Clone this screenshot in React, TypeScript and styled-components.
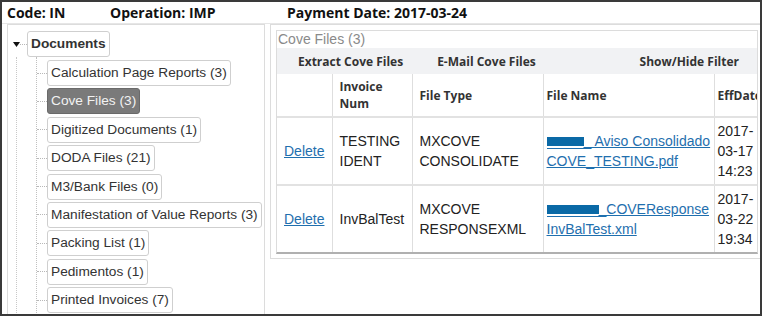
import React from "react";
import styled, { createGlobalStyle } from "styled-components";

const GlobalStyle = createGlobalStyle`
  body {
    margin: 0;
    background: #fff;
  }
`;

const Frame = styled.div`
  width: 762px;
  height: 316px;
  box-sizing: border-box;
  border: 2px solid #3a3a3a;
  overflow: hidden;
  background: #fff;
  display: flex;
  flex-direction: column;
`;

const InfoBar = styled.div`
  display: grid;
  grid-template-columns: 103px 177px auto;
  align-items: center;
  height: 21px;
  flex-shrink: 0;
  padding-left: 5px;
  border-bottom: 1px solid #e6e6e6;
  font-family: "Open Sans", sans-serif;
  font-weight: 700;
  font-size: 14px;
  color: #111;
  white-space: nowrap;
`;

const Body = styled.div`
  flex: 1;
  min-height: 0;
  display: flex;
  gap: 5px;
  padding-left: 5px;
`;

const LeftPanel = styled.div`
  width: 258px;
  flex-shrink: 0;
  box-sizing: border-box;
  border: 1px solid #dcdcdc;
  border-bottom: none;
  padding: 6px 0 0 5px;
  font-family: "Liberation Sans", Arial, sans-serif;
  font-size: 13.7px;
  color: #333;
`;

const RootRow = styled.div`
  display: flex;
  align-items: center;
`;

const Dash = styled.span<{ $w: number }>`
  width: ${(p) => p.$w}px;
  height: 0;
  border-top: 1px dotted #b8b8b8;
  flex-shrink: 0;
`;

const NodeBox = styled.span<{ $selected?: boolean; $bold?: boolean }>`
  display: inline-block;
  height: 26px;
  line-height: 24px;
  box-sizing: border-box;
  padding: 0 3px;
  border: 1px solid ${(p) => (p.$selected ? "#6a6a6a" : "#cfcfcf")};
  border-radius: 3px;
  background: ${(p) => (p.$selected ? "#7a7a7a" : "#fff")};
  color: ${(p) => (p.$selected ? "#f2f2f2" : "#333")};
  font-weight: ${(p) => (p.$bold ? 700 : 400)};
  white-space: nowrap;
`;

const RootLine = styled.div`
  margin-left: 3px;
  border-left: 1px dotted #c8c8c8;
  padding-bottom: 40px;
`;

const ChildList = styled.div`
  margin-left: 19px;
  border-left: 1px dotted #c0c0c0;
  padding-top: 3px;
  display: flex;
  flex-direction: column;
  gap: 2.4px;
`;

const ChildRow = styled.div`
  display: flex;
  align-items: center;
`;

const RightPanel = styled.div`
  width: 494px;
  flex-shrink: 0;
  align-self: flex-start;
  box-sizing: border-box;
  border: 1px solid #dcdcdc;
  padding: 5px 5px 4px;
`;

const GridBox = styled.div`
  border: 1px solid #dcdcdc;
  border-bottom: 2px solid #b0b0b0;
  overflow: hidden;
`;

const GridTitle = styled.div`
  line-height: 17px;
  padding-left: 1px;
  font-family: "Liberation Sans", Arial, sans-serif;
  font-size: 14px;
  color: #8a8a8a;
`;

const Toolbar = styled.div`
  display: flex;
  align-items: center;
  gap: 34px;
  height: 26px;
  padding: 0 18px 0 21px;
  background: #f1f2f4;
  font-family: "Open Sans", sans-serif;
  font-weight: 700;
  font-size: 12px;
  color: #333;
  white-space: nowrap;
`;

const ToolItem = styled.span<{ $right?: boolean }>`
  margin-left: ${(p) => (p.$right ? "auto" : "0")};
`;

const Table = styled.table`
  border-collapse: collapse;
  table-layout: fixed;
  width: 497px;
`;

const Th = styled.th<{ $pad: number }>`
  height: 43px;
  box-sizing: border-box;
  padding: 4px ${(p) => p.$pad}px;
  text-align: left;
  vertical-align: middle;
  font-family: "Open Sans", sans-serif;
  font-weight: 700;
  font-size: 12px;
  line-height: 17px;
  color: #333;
  white-space: nowrap;
  border-left: 1px solid #dedede;
  border-bottom: 2px solid #e2e2e2;
  &:first-child {
    border-left: none;
  }
`;

const Tr = styled.tr`
  & + & td {
    border-top: 2px solid #e2e2e2;
  }
`;

const Td = styled.td<{ $pad: number }>`
  height: 66px;
  box-sizing: border-box;
  padding: 3px ${(p) => p.$pad}px;
  vertical-align: middle;
  font-family: "Liberation Sans", Arial, sans-serif;
  font-size: 14px;
  line-height: 20px;
  color: #222;
  border-left: 1px solid #dedede;
  &:first-child {
    border-left: none;
  }
`;

const Link = styled.a`
  color: #1f6fae;
  text-decoration: underline;
  cursor: pointer;
`;

const Redacted = styled.span<{ $w: number }>`
  display: inline-block;
  width: ${(p) => p.$w}px;
  height: 12px;
  vertical-align: -3px;
  background: linear-gradient(
    #0a69a6 0 9px,
    transparent 9px 11px,
    #1f6fae 11px 12px
  );
`;

const children = [
  { label: "Calculation Page Reports (3)" },
  { label: "Cove Files (3)", selected: true },
  { label: "Digitized Documents (1)" },
  { label: "DODA Files (21)" },
  { label: "M3/Bank Files (0)" },
  { label: "Manifestation of Value Reports (3)" },
  { label: "Packing List (1)" },
  { label: "Pedimentos (1)" },
  { label: "Printed Invoices (7)" },
];

const files = [
  {
    invoice: ["TESTING", "IDENT"],
    type: ["MXCOVE", "CONSOLIDATE"],
    block: 37,
    name1: "_ Aviso Consolidado",
    name2: "COVE_TESTING.pdf",
    date: ["2017-", "03-17", "14:23"],
  },
  {
    invoice: ["InvBalTest"],
    type: ["MXCOVE", "RESPONSEXML"],
    block: 52,
    name1: "_COVEResponse",
    name2: "InvBalTest.xml",
    date: ["2017-", "03-22", "19:34"],
  },
];

const lines = (parts: string[]) =>
  parts.map((p, i) => (
    <React.Fragment key={i}>
      {i > 0 && <br />}
      {p}
    </React.Fragment>
  ));

export default function App() {
  return (
    <>
      <GlobalStyle />
      <Frame>
        <InfoBar>
          <span>Code: IN</span>
          <span>Operation: IMP</span>
          <span>Payment Date: 2017-03-24</span>
        </InfoBar>
        <Body>
          <LeftPanel>
            <RootRow>
              <svg width="7" height="5" viewBox="0 0 7 5">
                <polygon points="0,0 7,0 3.5,5" fill="#111" />
              </svg>
              <Dash $w={7} />
              <NodeBox $bold>Documents</NodeBox>
            </RootRow>
            <RootLine>
              <ChildList>
                {children.map((c) => (
                  <ChildRow key={c.label}>
                    <Dash $w={10} />
                    <NodeBox $selected={c.selected}>{c.label}</NodeBox>
                  </ChildRow>
                ))}
              </ChildList>
            </RootLine>
          </LeftPanel>
          <RightPanel>
            <GridBox>
              <GridTitle>Cove Files (3)</GridTitle>
              <Toolbar>
                <ToolItem>Extract Cove Files</ToolItem>
                <ToolItem>E-Mail Cove Files</ToolItem>
                <ToolItem $right>Show/Hide Filter</ToolItem>
              </Toolbar>
              <Table>
                <colgroup>
                  <col style={{ width: 55 }} />
                  <col style={{ width: 80 }} />
                  <col style={{ width: 131 }} />
                  <col style={{ width: 171 }} />
                  <col style={{ width: 60 }} />
                </colgroup>
                <thead>
                  <tr>
                    <Th $pad={7}></Th>
                    <Th $pad={7}>
                      Invoice
                      <br />
                      Num
                    </Th>
                    <Th $pad={7}>File Type</Th>
                    <Th $pad={3}>File Name</Th>
                    <Th $pad={3}>EffDate</Th>
                  </tr>
                </thead>
                <tbody>
                  {files.map((f, i) => (
                    <Tr key={i}>
                      <Td $pad={7}>
                        <Link>Delete</Link>
                      </Td>
                      <Td $pad={7}>{lines(f.invoice)}</Td>
                      <Td $pad={7}>{lines(f.type)}</Td>
                      <Td $pad={3}>
                        <Link>
                          <Redacted $w={f.block} />
                          {f.name1}
                          <br />
                          {f.name2}
                        </Link>
                      </Td>
                      <Td $pad={3}>{lines(f.date)}</Td>
                    </Tr>
                  ))}
                </tbody>
              </Table>
            </GridBox>
          </RightPanel>
        </Body>
      </Frame>
    </>
  );
}
